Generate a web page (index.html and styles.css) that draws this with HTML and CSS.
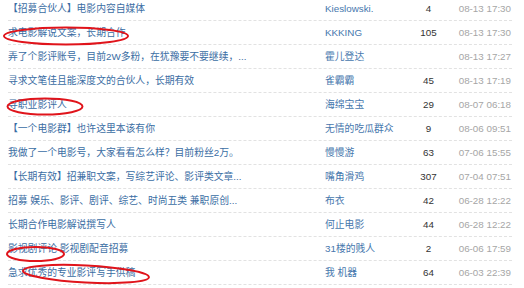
FILE: index.html
```html
<!DOCTYPE html>
<html lang="zh-CN">
<head>
<meta charset="utf-8">
<title>话题列表</title>
<link rel="stylesheet" href="styles.css">
</head>
<body>
<div class="page">
  <ul class="list">
    <li class="row"><span class="title">【招募合伙人】电影内容自媒体</span><span class="author">Kieslowski.</span><span class="count">4</span><span class="time">08-13 17:30</span></li>
    <li class="row"><span class="title">求电影解说文案，长期合作</span><span class="author">KKKING</span><span class="count">105</span><span class="time">08-13 17:30</span></li>
    <li class="row"><span class="title">弄了个影评账号，目前2W多粉，在犹豫要不要继续，...</span><span class="author">霍儿登达</span><span class="count"></span><span class="time">08-13 17:27</span></li>
    <li class="row"><span class="title">寻求文笔佳且能深度文的合伙人，长期有效</span><span class="author">雀霸霸</span><span class="count">45</span><span class="time">08-13 17:19</span></li>
    <li class="row"><span class="title">寻职业影评人</span><span class="author">海绵宝宝</span><span class="count">29</span><span class="time">08-07 06:18</span></li>
    <li class="row"><span class="title">【一个电影群】也许这里本该有你</span><span class="author">无情的吃瓜群众</span><span class="count">9</span><span class="time">08-06 09:51</span></li>
    <li class="row"><span class="title">我做了一个电影号，大家看看怎么样？目前粉丝2万。</span><span class="author">慢慢游</span><span class="count">63</span><span class="time">07-06 15:55</span></li>
    <li class="row"><span class="title">【长期有效】招兼职文案，写综艺评论、影评类文章...</span><span class="author">嘴角滑鸡</span><span class="count">307</span><span class="time">07-04 07:51</span></li>
    <li class="row"><span class="title">招募 娱乐、影评、剧评、综艺、时尚五类 兼职原创...</span><span class="author">布衣</span><span class="count">42</span><span class="time">06-28 12:22</span></li>
    <li class="row"><span class="title">长期合作电影解说撰写人</span><span class="author">何止电影</span><span class="count">44</span><span class="time">06-28 12:22</span></li>
    <li class="row"><span class="title">影视剧评论 影视剧配音招募</span><span class="author">31楼的贱人</span><span class="count">2</span><span class="time">06-06 17:59</span></li>
    <li class="row"><span class="title">急求优秀的专业影评写手供稿</span><span class="author">我 机器</span><span class="count">64</span><span class="time">06-03 22:39</span></li>
  </ul>
  <svg class="marks" width="524" height="288" viewBox="0 0 524 288" aria-hidden="true">
    <ellipse cx="66" cy="36" rx="62" ry="8.5" />
    <ellipse cx="45" cy="106.5" rx="37.5" ry="8" />
    <ellipse cx="35.5" cy="254" rx="28.5" ry="7" />
    <ellipse cx="86" cy="274" rx="63" ry="8.5" transform="rotate(3 86 274)" />
  </svg>
</div>
</body>
</html>
```

FILE: styles.css
```css
html, body {
  margin: 0;
  padding: 0;
  background: #ffffff;
}

.page {
  position: relative;
  width: 524px;
  height: 288px;
  overflow: hidden;
  font-family: "Liberation Sans", "Noto Sans CJK SC", sans-serif;
  font-size: 9.8px;
}

.list {
  list-style: none;
  margin: -3px 12px 0 8px;
  padding: 0;
}

.row {
  display: grid;
  grid-template-columns: 317px 83px 41px 1fr;
  height: 23px;
  line-height: 23px;
  border-bottom: 1px dashed #e2e2e2;
  white-space: nowrap;
}

.title {
  color: #3a6da3;
  overflow: hidden;
}

.author {
  color: #4677ad;
}

.count {
  color: #333333;
  text-align: center;
}

.time {
  color: #a6a6a6;
  text-align: right;
  padding-right: 1px;
}

.marks {
  position: absolute;
  left: 0;
  top: 0;
  pointer-events: none;
}

.marks ellipse {
  fill: none;
  stroke: #e0141b;
  stroke-width: 2;
}
```
